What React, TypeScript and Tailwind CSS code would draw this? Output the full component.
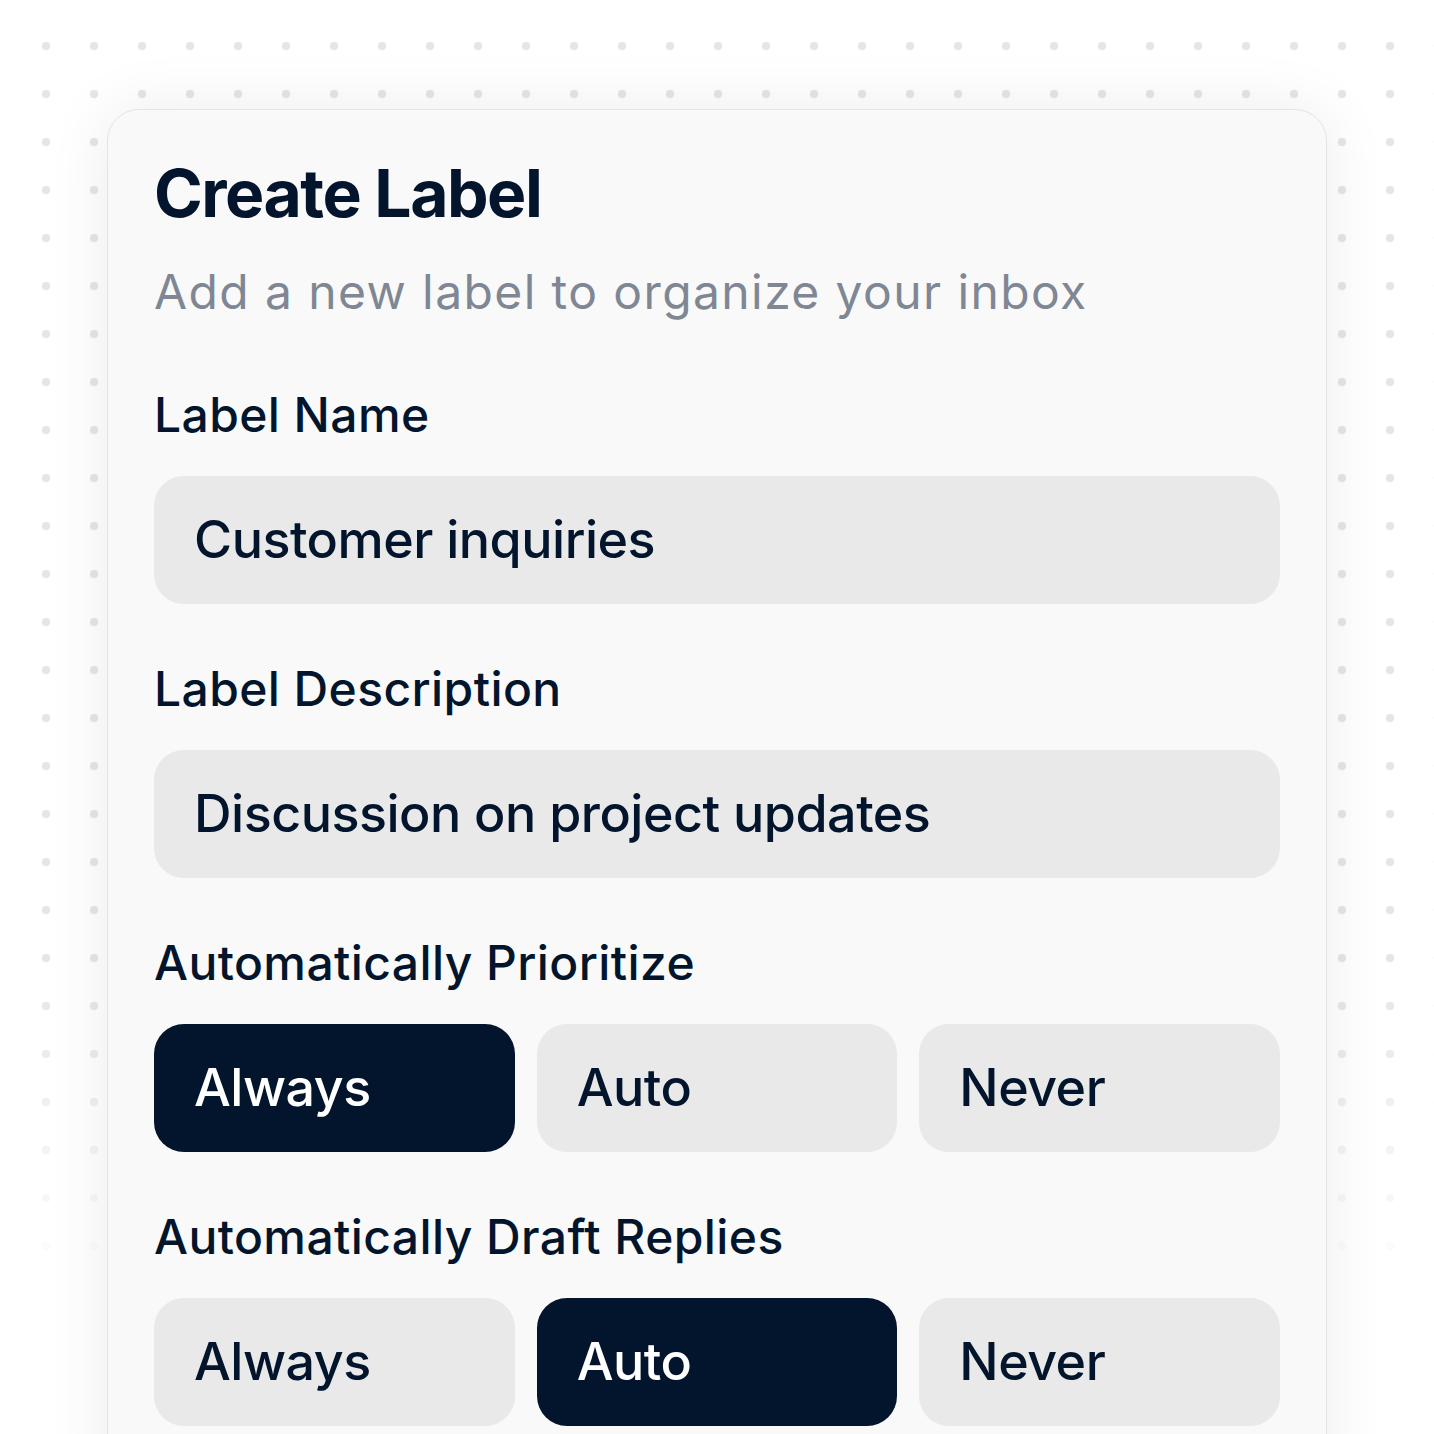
import React from "react";

const prioritize = ["Always", "Auto", "Never"];

function Choice({ options, selected }: { options: string[]; selected: string }) {
  return (
    <div className="grid grid-cols-3 gap-[22px]">
      {options.map((o) => (
        <div
          key={o}
          className={
            o === selected
              ? "h-[128px] rounded-[30px] bg-[#02152c] pl-[40px] flex items-center text-[52px] font-medium text-white tracking-[-0.5px]"
              : "h-[128px] rounded-[30px] bg-[#e9e9e9] pl-[40px] flex items-center text-[52px] font-medium text-[#02152c] tracking-[-0.5px]"
          }
        >
          {o}
        </div>
      ))}
    </div>
  );
}

function Field({ value }: { value: string }) {
  return (
    <div className="h-[128px] rounded-[30px] bg-[#e9e9e9] pl-[40px] flex items-center text-[52px] font-medium text-[#02152c] tracking-[-0.5px]">
      {value}
    </div>
  );
}

function FieldLabel({ children }: { children: React.ReactNode }) {
  return (
    <div className="mb-[38px] text-[48px] leading-[46px] font-medium text-[#02152c] tracking-[0.4px]">{children}</div>
  );
}

export default function App() {
  return (
    <div
      className="relative w-[1434px] h-[1434px] overflow-hidden bg-white"
      style={{ fontFamily: "Inter, 'Noto Sans', sans-serif" }}
    >
      {/* dotted backdrop */}
      <div className="absolute left-[22px] top-[22px] right-0 bottom-0 bg-[radial-gradient(circle,#e6e6e6_4px,transparent_4.6px)] bg-[size:48px_48px] [mask-image:linear-gradient(to_bottom,black_68%,transparent_90%)]" />

      <div className="relative ml-[107px] mt-[109px] w-[1220px] h-[1400px] rounded-[32px] border border-[#e4e4e4] bg-[#f9f9f9] shadow-[0_0_64px_rgba(0,0,0,0.08)] px-[46px] pt-[50px]">
        <h1 className="text-[66px] leading-none font-bold tracking-[-1.5px] text-[#02152c]">Create Label</h1>
        <p className="mt-[42px] text-[48px] leading-none text-[#7f8794] tracking-[1.4px]">
          Add a new label to organize your inbox
        </p>

        <div className="mt-[76px] flex flex-col gap-[62px]">
          <div>
            <FieldLabel>Label Name</FieldLabel>
            <Field value="Customer inquiries" />
          </div>
          <div>
            <FieldLabel>Label Description</FieldLabel>
            <Field value="Discussion on project updates" />
          </div>
          <div>
            <FieldLabel>Automatically Prioritize</FieldLabel>
            <Choice options={prioritize} selected="Always" />
          </div>
          <div>
            <FieldLabel>Automatically Draft Replies</FieldLabel>
            <Choice options={prioritize} selected="Auto" />
          </div>
        </div>
      </div>
    </div>
  );
}
